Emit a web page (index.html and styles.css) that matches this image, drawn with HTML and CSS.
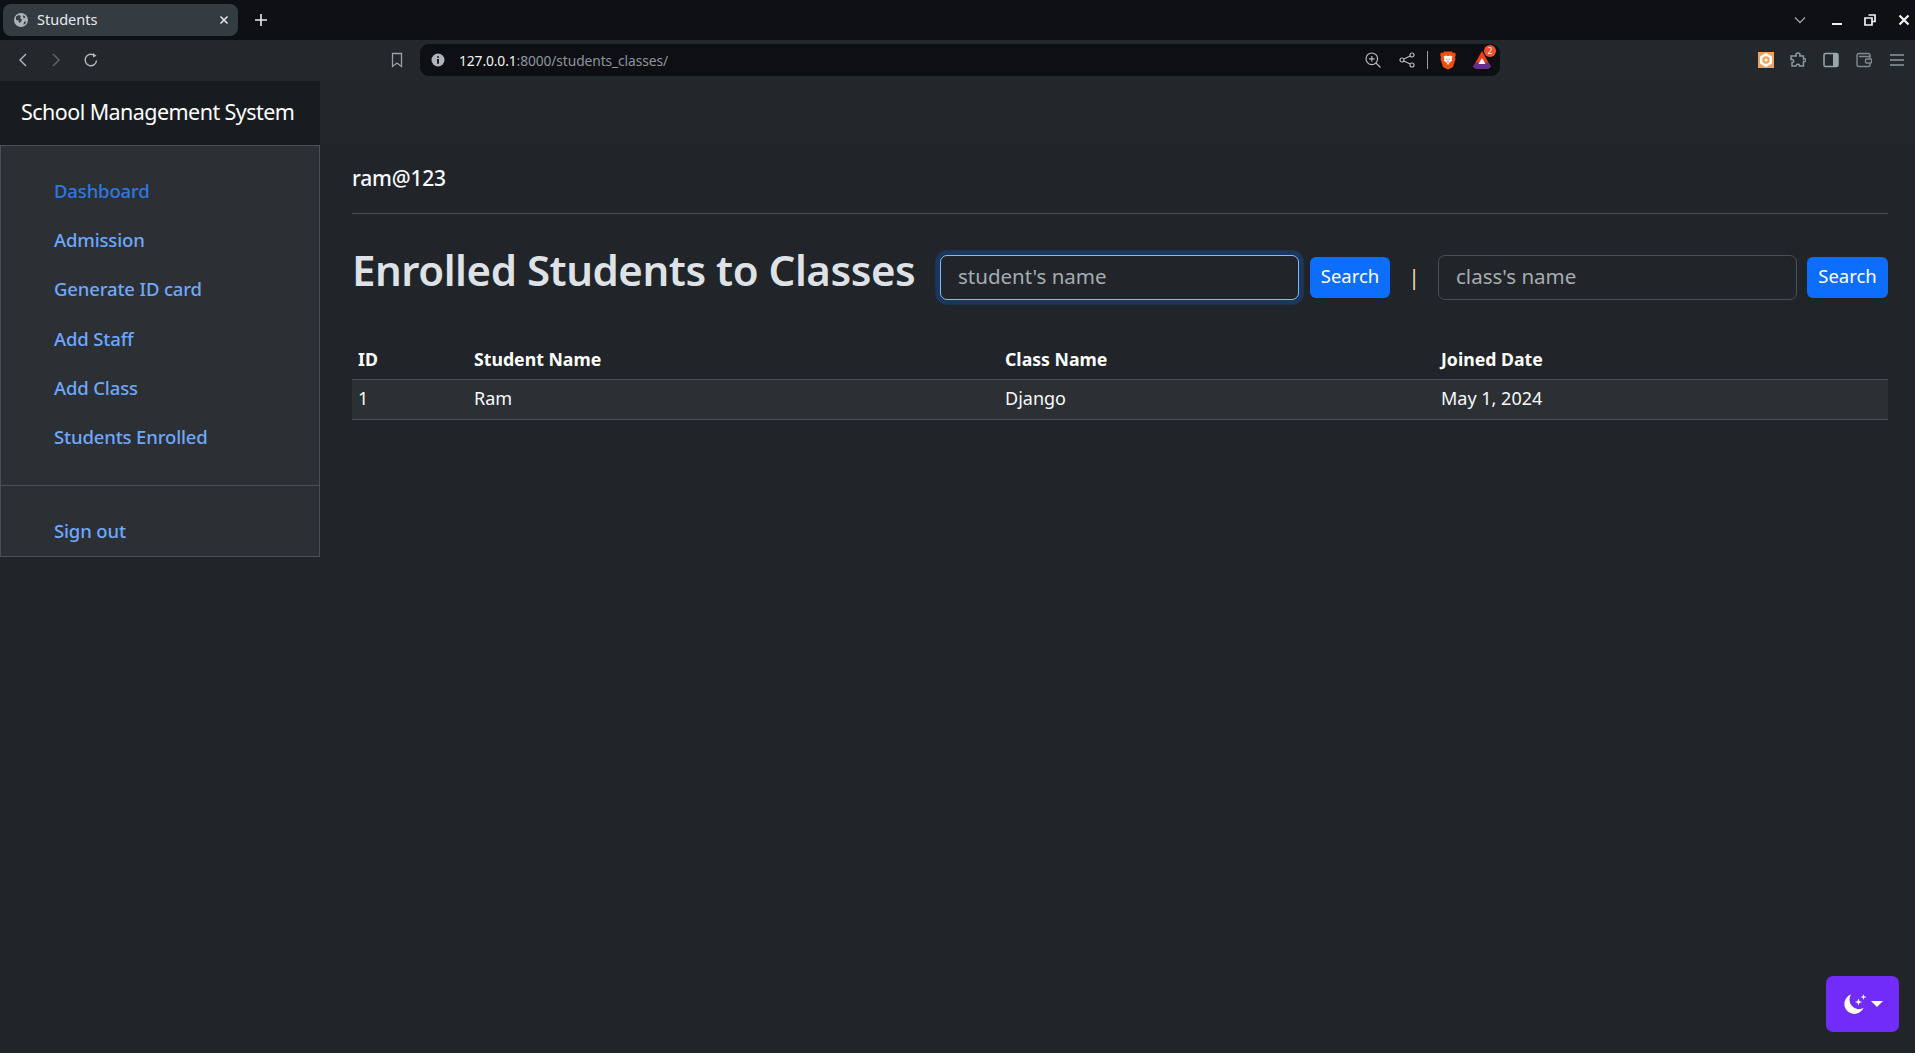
FILE: index.html
```html
<!DOCTYPE html>
<html lang="en">
<head>
<meta charset="utf-8">
<title>Students</title>
<link rel="stylesheet" href="styles.css">
</head>
<body>
<header class="browser">
  <div class="tabstrip">
    <div class="tab">
      <svg class="tab-globe" viewBox="0 0 14 14" width="14" height="14"><circle cx="7" cy="7" r="7" fill="#aeb4b9"/><path d="M2 3.500l3-1.500 2 1-1 2 2 1.500-1 2.500-2 1-.5-2.500L2 7zM9.500 2l2 2-1.500 1.500L9 4zM10 9l2-1-.5 2.500-2 1.500z" fill="#3a4045"/></svg>
      <span class="tab-title">Students</span>
      <svg class="tab-close" viewBox="0 0 10 10" width="10" height="10"><path d="M1.500 1.500l7 7M8.500 1.500l-7 7" stroke="#e8eaed" stroke-width="1.500" fill="none"/></svg>
    </div>
    <svg class="new-tab" viewBox="0 0 14 14" width="14" height="14"><path d="M7 1v12M1 7h12" stroke="#e8eaed" stroke-width="1.600" fill="none"/></svg>
    <div class="window-controls">
      <svg class="chev" viewBox="0 0 12 8" width="12" height="8"><path d="M1 1.500l5 5 5-5" stroke="#9aa0a6" stroke-width="1.300" fill="none"/></svg>
      <svg class="win-min" viewBox="0 0 12 12" width="12" height="12"><path d="M1 10h10" stroke="#f1f3f4" stroke-width="2" fill="none"/></svg>
      <svg class="win-max" viewBox="0 0 12 12" width="12" height="12"><path d="M4.500 1h6.500v6.500H8M1 4h7v7H1z" stroke="#f1f3f4" stroke-width="1.700" fill="none"/></svg>
      <svg class="win-close" viewBox="0 0 12 12" width="12" height="12"><path d="M1.500 1.500l9 9M10.500 1.500l-9 9" stroke="#f1f3f4" stroke-width="2.200" fill="none"/></svg>
    </div>
  </div>
  <div class="toolbar">
    <div class="nav-buttons">
      <svg viewBox="0 0 10 16" width="10" height="16"><path d="M8 2L2 8l6 6" stroke="#b4babf" stroke-width="1.400" fill="none"/></svg>
      <svg viewBox="0 0 10 16" width="10" height="16"><path d="M2 2l6 6-6 6" stroke="#62686d" stroke-width="1.400" fill="none"/></svg>
      <svg viewBox="0 0 16 16" width="16" height="16"><path d="M13.500 8.500A5.700 5.700 0 1 1 10.500 3" stroke="#b4babf" stroke-width="1.400" fill="none"/><path d="M10 1l3.500 2.700L10 5.500z" fill="#b4babf"/></svg>
    </div>
    <svg class="bookmark" viewBox="0 0 12 16" width="12" height="16"><path d="M1.500 1.500h9v13L6 11l-4.500 3.500z" stroke="#9aa0a6" stroke-width="1.300" fill="none"/></svg>
    <div class="urlbar">
      <svg class="url-info" viewBox="0 0 14 14" width="14" height="14"><circle cx="7" cy="7" r="6.500" fill="#aeb4b9"/><path d="M7 3.200v1.600M7 6v4.800" stroke="#0d0f13" stroke-width="1.800"/></svg>
      <span class="url"><b>127.0.0.1</b>:8000/students_classes/</span>
      <div class="url-actions">
        <svg class="u-zoom" viewBox="0 0 16 16" width="16" height="16"><circle cx="6.800" cy="6.800" r="5.800" stroke="#b4babf" stroke-width="1.200" fill="none"/><path d="M11 11l4.500 4.500M6.800 4v5.600M4 6.800h5.600" stroke="#b4babf" stroke-width="1.200" fill="none"/></svg>
        <svg class="u-share" viewBox="0 0 16 16" width="16" height="16"><circle cx="13" cy="3" r="2" stroke="#b4babf" stroke-width="1.200" fill="none"/><circle cx="13" cy="13" r="2" stroke="#b4babf" stroke-width="1.200" fill="none"/><circle cx="3" cy="8" r="2" stroke="#b4babf" stroke-width="1.200" fill="none"/><path d="M11.200 4L4.800 7M4.800 9l6.400 3" stroke="#b4babf" stroke-width="1.200" fill="none"/></svg>
        <span class="u-sep"></span>
        <svg class="u-brave" viewBox="0 0 16 19" width="16" height="19"><path d="M4 .5h8l1 1.500 2-.5.800 2.500-.8 2.500.5 1.500-2.500 8L8 18.500 3 16 .5 8l.5-1.500L.2 4 1 1.500 3 2z" fill="#f0500f"/><path d="M3.500 5.500l2.500-1 2 .7 2-.7 2.500 1-1 2.500.8 1.500-2.800 2L8 14l-1.500-2.500-2.800-2 .8-1.500z" fill="#fff"/><path d="M6.300 8.300h1M8.700 8.300h1M8 9.500v2" stroke="#f0500f" stroke-width="1" fill="none"/></svg>
        <span class="u-bat">
          <svg viewBox="0 0 18 18" width="18" height="18"><path d="M9 0l9 16H0z" fill="#ee3f24"/><path d="M0 16l2.500-4.500h13L18 16l-3 2H3z" fill="#662d91"/><path d="M9 7l3.500 6h-7z" fill="#fff"/></svg>
          <span class="u-badge">2</span>
        </span>
      </div>
    </div>
    <div class="ext-icons">
      <span class="ext-orange"><svg viewBox="0 0 16 16" width="16" height="16"><path d="M8 1l6 3.500v7L8 15l-6-3.500v-7z" fill="#fff"/><circle cx="8" cy="8" r="3.800" fill="#f3a55b"/><circle cx="8" cy="8" r="1.600" fill="#fff"/></svg></span>
      <svg viewBox="0 0 16 16" width="16" height="16"><path d="M6 2.500c0-2 4-2 4 0 0 .7-.3 1-.3 1.500h3.800v3c1.800-.6 2.500.5 2.200 1.500-.3 1-1.200 1.300-2.200 1v4.500H9.500c.5-2-3-2.500-3.500 0H2v-3.500c1.500.2 2-1 1.500-2S2 7 1 7.500V4h5.300C6.300 3.500 6 3.200 6 2.500z" stroke="#8c979e" stroke-width="1.500" fill="none"/></svg>
      <svg viewBox="0 0 16 16" width="16" height="16"><rect x="1" y="1.500" width="14" height="13" rx="1.500" stroke="#9aa5ab" stroke-width="1.500" fill="none"/><rect x="10" y="2" width="5" height="12" fill="#9aa5ab"/></svg>
      <svg viewBox="0 0 16 16" width="16" height="16"><path d="M14 4.500V3.200c0-1-.6-1.700-1.700-1.700H3C1.800 1.500 1 2.300 1 3.500v9c0 1.200.8 2 2 2h9.500c1 0 1.500-.6 1.500-1.500v-8.500H3" stroke="#7f8a91" stroke-width="1.400" fill="none"/><rect x="9.500" y="7" width="6" height="4" rx="1" stroke="#7f8a91" stroke-width="1.400" fill="#22282c"/></svg>
      <svg viewBox="0 0 16 16" width="16" height="16"><path d="M1 3h14M1 8h14M1 13h14" stroke="#8c979e" stroke-width="1.400" fill="none"/></svg>
    </div>
  </div>
</header>

<div class="app-header">
  <a class="brand">School Management System</a>
</div>

<div class="app-body">
  <aside class="sidebar">
    <ul class="side-nav side-nav-main">
      <li><a class="side-link side-link-active">Dashboard</a></li>
      <li><a class="side-link">Admission</a></li>
      <li><a class="side-link">Generate ID card</a></li>
      <li><a class="side-link">Add Staff</a></li>
      <li><a class="side-link">Add Class</a></li>
      <li><a class="side-link">Students Enrolled</a></li>
    </ul>
    <hr class="side-rule">
    <ul class="side-nav side-nav-foot">
      <li><a class="side-link">Sign out</a></li>
    </ul>
  </aside>

  <main class="content">
    <div class="user-bar">ram@123</div>
    <div class="title-row">
      <h1 class="page-title">Enrolled Students to Classes</h1>
      <input class="field field-focus" type="text" placeholder="student's name">
      <button class="btn-search btn-first">Search</button>
      <span class="pipe">|</span>
      <input class="field" type="text" placeholder="class's name">
      <button class="btn-search btn-last">Search</button>
    </div>
    <table class="students">
      <colgroup><col class="c-id"><col class="c-student"><col class="c-class"><col class="c-date"></colgroup>
      <thead><tr><th>ID</th><th>Student Name</th><th>Class Name</th><th>Joined Date</th></tr></thead>
      <tbody><tr><td>1</td><td>Ram</td><td>Django</td><td>May 1, 2024</td></tr></tbody>
    </table>
  </main>
</div>

<button class="theme-btn">
  <svg viewBox="0 0 24 22" width="24" height="22"><path d="M8 1.500A10 10 0 1 0 20.500 15 9.500 9.500 0 0 1 8 1.500z" fill="#fff"/><path d="M15.500 5.500l.9 2.600 2.600.9-2.600.9-.9 2.600-.9-2.600-2.600-.9 2.600-.9zM20.500 1l.7 2.300 2.300.7-2.300.7-.7 2.300-.7-2.300-2.300-.7 2.300-.7z" fill="#fff"/></svg>
  <svg viewBox="0 0 12 6" width="12" height="6"><path d="M0 0h12L6 6z" fill="#fff"/></svg>
</button>
</body>
</html>
```

FILE: styles.css
```css
* { box-sizing: border-box; }
html, body { margin: 0; height: 100%; }
body {
  height: 1053px;
  overflow: hidden;
  background: #212529;
  color: #dee2e6;
  font-family: "Noto Sans", "Open Sans", sans-serif;
  font-size: 19.2px;
  display: flex;
  flex-direction: column;
}
svg { display: block; flex: none; }

/* browser chrome */
.browser { flex: none; }
.tabstrip {
  height: 40px;
  background: #0e1014;
  display: flex;
  align-items: center;
  padding-left: 3px;
}
.tab {
  width: 235px;
  height: 32px;
  background: #343b41;
  border-radius: 8px;
  display: flex;
  align-items: center;
  padding: 0 9px 0 11px;
  color: #e8eaed;
  font-size: 14.500px;
}
.tab-title { margin-left: 9px; flex: 1; padding-bottom: 2px; }
.new-tab { margin-left: 16px; }
.window-controls {
  margin-left: auto;
  display: flex;
  align-items: center;
  padding-right: 5px;
}
.win-min { margin-left: 25px; }
.win-max { margin-left: 21px; }
.win-close { margin-left: 22px; }
.toolbar {
  height: 41px;
  background: #22282c;
  display: flex;
  align-items: center;
  padding: 0 10px 1px 18px;
}
.nav-buttons { display: flex; align-items: center; gap: 23px; width: 358px; }
.nav-buttons svg:last-child { margin-left: -1px; }
.bookmark { margin-left: 15px; }
.urlbar {
  margin-left: 17px;
  width: 1080px;
  height: 32px;
  background: #0d0f13;
  border-radius: 9px;
  display: flex;
  align-items: center;
  padding-left: 11px;
}
.url {
  margin-left: 14px;
  font-size: 13.800px;
  color: #8f959b;
  letter-spacing: -.1px;
}
.url b { color: #f1f3f4; font-weight: 400; }
.url-actions { margin-left: auto; display: flex; align-items: center; padding-right: 9px; }
.u-share { margin-left: 18px; }
.u-sep { width: 1px; height: 18px; background: #9aa0a6; margin: 0 12px 0 12px; }
.u-bat { position: relative; margin-left: 17px; display: block; }
.u-badge {
  position: absolute;
  top: -6px;
  right: -5px;
  width: 12px;
  height: 12px;
  border-radius: 50%;
  background: #f4502c;
  color: #fff;
  font-size: 8px;
  line-height: 12px;
  text-align: center;
}
.ext-icons { margin-left: auto; display: flex; align-items: center; gap: 17px; }
.ext-orange { display: block; background: #f0a35e; margin-right: -1px; }

/* app */
.app-header {
  flex: none;
  height: 64px;
  background: #23272b;
}
.brand {
  display: flex;
  align-items: center;
  width: 320px;
  height: 100%;
  padding: 0 0 4px 21px;
  background: #191c1f;
  color: #fff;
  font-size: 21.500px;
  letter-spacing: -.56px;
  white-space: nowrap;
}
.app-body { flex: 1; display: flex; align-items: flex-start; min-width: 0; }
.sidebar {
  flex: none;
  width: 320px;
  height: 412px;
  background: #2c3034;
  border: 1px solid #495057;
  padding-top: 19.500px;
}
.side-nav { list-style: none; margin: 0; padding: 0 0 0 53px; }
.side-nav li { height: 49.300px; display: flex; align-items: center; }
.side-link {
  color: #6ea8fe;
  font-weight: 500;
  font-size: 18.500px;
  letter-spacing: -.15px;
}
.side-link-active { color: #2f77e0; }
.side-rule { border: 0; border-top: 1px solid #495057; margin: 23.500px 0 20px; }
.content { flex: 1; min-width: 0; padding: 0 27px 0 32px; }
.user-bar {
  height: 69px;
  border-bottom: 1px solid #4a4f54;
  color: #f8f9fa;
  font-size: 21px;
  font-weight: 500;
  display: flex;
  align-items: center;
  letter-spacing: -.2px;
  padding-bottom: 3px;
}
.title-row {
  display: flex;
  align-items: center;
  margin-top: 40px;
  height: 46px;
}
.page-title {
  margin: 0 0 15px;
  flex: none;
  width: 588px;
  font-size: 42px;
  font-weight: 600;
  color: #dee2e6;
  white-space: nowrap;
  letter-spacing: -.46px;
}
.field {
  flex: none;
  width: 359px;
  height: 45px;
  background: #212529;
  border: 1px solid #495057;
  border-radius: 7px;
  padding: 0 17px 3px;
  font: inherit;
  font-size: 20.500px;
  color: #dee2e6;
  outline: none;
}
.field::placeholder { color: rgba(222, 226, 230, .72); opacity: 1; }
.field-focus {
  border-color: #86b7fe;
  box-shadow: 0 0 0 4.800px rgba(13, 110, 253, .25);
}
.btn-search {
  flex: none;
  height: 41px;
  background: #0d6efd;
  color: #fff;
  border: 0;
  border-radius: 6px;
  font: inherit;
  font-size: 18.500px;
  padding: 0 0 3px;
}
.btn-first { width: 80px; margin-left: 11px; }
.btn-last { width: 81px; margin-left: 10px; }
.pipe {
  flex: none;
  width: 48px;
  padding-bottom: 3px;
  text-align: center;
  color: #f2d9a8;
  font-size: 22px;
}
.students {
  width: 100%;
  margin-top: 40px;
  border-collapse: collapse;
  table-layout: fixed;
  color: #fff;
}
.c-id { width: 116px; }
.c-student { width: 531px; }
.c-class { width: 436px; }
.students th, .students td {
  padding: 0 6px 3px;
  text-align: left;
  border-bottom: 1px solid #495057;
}
.students th { height: 39px; font-weight: 700; font-size: 17.700px; padding-bottom: 1px; }
.students td { height: 40px; background: #2c3034; font-weight: 400; color: #f8f9fa; font-size: 18px; }
.theme-btn {
  position: fixed;
  left: 1826px;
  top: 976px;
  width: 73px;
  height: 56px;
  background: #712cf9;
  border: 0;
  border-radius: 7px;
  display: flex;
  align-items: center;
  justify-content: center;
  gap: 4px;
  padding: 0;
}
```
